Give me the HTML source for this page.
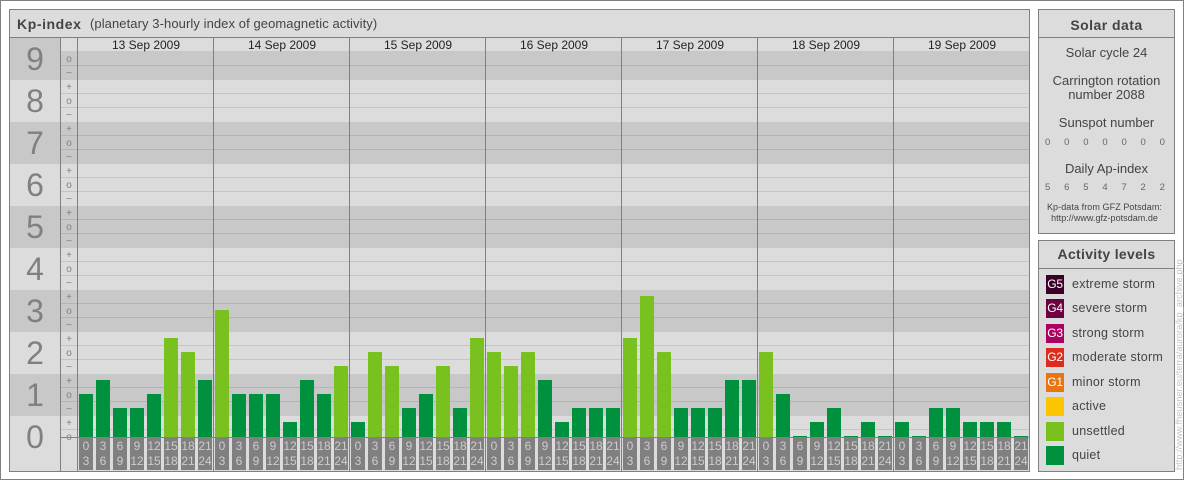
<!DOCTYPE html>
<html><head><meta charset="utf-8"><style>
html,body{margin:0;padding:0;background:#fff}
#p{position:relative;width:1184px;height:480px;overflow:hidden;background:#fff;font-family:"Liberation Sans",sans-serif;color:#444}
#p div{position:absolute;box-sizing:border-box}
.v{background:#808080;width:1px}
.d{background:#c8c8c8}
.hl{left:61px;width:968px;height:1px;background:rgba(0,0,0,.1)}
.num{left:10px;width:50px;text-align:center;font-size:32px;line-height:42px;color:#808080}
.s{left:61px;width:16px;text-align:center;font-size:10px;line-height:14px;color:#808080;margin-top:1px}
.date{top:38px;width:136px;height:14px;text-align:center;font-size:12px;line-height:14px;color:#222}
.row{display:flex;gap:3px}
#p .row>span{display:block;width:14px;flex:none}
.q{background:#00913f}.u{background:#78c11e}
#p .lab>span{height:32px;background:#808080;color:#ccc;font-size:12px;line-height:15px;text-align:center;padding-top:1px;box-sizing:border-box}
.c{text-align:center;left:1039px;width:135px;white-space:nowrap}
.t{font-size:13px;line-height:14px;color:#444}
.nums{left:1039px;width:135px;display:flex;justify-content:space-between;padding:0 9px 0 6px;font-size:9.5px;line-height:12px;color:#666}
.sw{left:1046px;width:18px;height:19px;color:#fff;font-size:12px;letter-spacing:-.3px;line-height:19px;text-align:center;white-space:nowrap}
.lt{left:1072px;font-size:12.5px;line-height:14px;letter-spacing:.25px;color:#444;white-space:nowrap}
</style></head><body><div id="p">
<div style="left:0;top:0;width:1184px;height:480px;border:1px solid #808080"></div>
<div style="left:9px;top:9px;width:1021px;height:463px;border:1px solid #808080;background:#dcdcdc"></div>
<div style="left:10px;top:37px;width:1019px;height:1px;background:#808080"></div>
<div style="left:17px;top:16px;font-size:14px;font-weight:bold;line-height:16px;letter-spacing:.58px;color:#444">Kp-index</div>
<div style="left:90px;top:16px;font-size:13px;line-height:16px;letter-spacing:.08px;color:#444;white-space:nowrap">(planetary 3-hourly index of geomagnetic activity)</div>

<div class="d" style="left:10px;top:38px;width:51px;height:42px"></div>
<div class="d" style="left:61px;top:51px;width:968px;height:29px"></div>
<div class="d" style="left:10px;top:122px;width:1019px;height:42px"></div>
<div class="d" style="left:10px;top:206px;width:1019px;height:42px"></div>
<div class="d" style="left:10px;top:290px;width:1019px;height:42px"></div>
<div class="d" style="left:10px;top:374px;width:1019px;height:42px"></div>

<div class="hl" style="top:65px"></div><div class="hl" style="top:93px"></div><div class="hl" style="top:107px"></div>
<div class="hl" style="top:135px"></div><div class="hl" style="top:149px"></div><div class="hl" style="top:177px"></div>
<div class="hl" style="top:191px"></div><div class="hl" style="top:219px"></div><div class="hl" style="top:233px"></div>
<div class="hl" style="top:261px"></div><div class="hl" style="top:275px"></div><div class="hl" style="top:303px"></div>
<div class="hl" style="top:317px"></div><div class="hl" style="top:345px"></div><div class="hl" style="top:359px"></div>
<div class="hl" style="top:387px"></div><div class="hl" style="top:401px"></div><div class="hl" style="top:429px"></div>

<div class="num" style="top:38px">9</div><div class="num" style="top:80px">8</div><div class="num" style="top:122px">7</div>
<div class="num" style="top:164px">6</div><div class="num" style="top:206px">5</div><div class="num" style="top:248px">4</div>
<div class="num" style="top:290px">3</div><div class="num" style="top:332px">2</div><div class="num" style="top:374px">1</div>
<div class="num" style="top:416px">0</div>

<div class="s" style="top:52px">o</div><div class="s" style="top:66px">−</div>
<div class="s" style="top:80px">+</div><div class="s" style="top:94px">o</div><div class="s" style="top:108px">−</div>
<div class="s" style="top:122px">+</div><div class="s" style="top:136px">o</div><div class="s" style="top:150px">−</div>
<div class="s" style="top:164px">+</div><div class="s" style="top:178px">o</div><div class="s" style="top:192px">−</div>
<div class="s" style="top:206px">+</div><div class="s" style="top:220px">o</div><div class="s" style="top:234px">−</div>
<div class="s" style="top:248px">+</div><div class="s" style="top:262px">o</div><div class="s" style="top:276px">−</div>
<div class="s" style="top:290px">+</div><div class="s" style="top:304px">o</div><div class="s" style="top:318px">−</div>
<div class="s" style="top:332px">+</div><div class="s" style="top:346px">o</div><div class="s" style="top:360px">−</div>
<div class="s" style="top:374px">+</div><div class="s" style="top:388px">o</div><div class="s" style="top:402px">−</div>
<div class="s" style="top:416px">+</div><div class="s" style="top:430px">o</div>

<div class="date" style="left:78px">13 Sep 2009</div><div class="date" style="left:214px">14 Sep 2009</div>
<div class="date" style="left:350px">15 Sep 2009</div><div class="date" style="left:486px">16 Sep 2009</div>
<div class="date" style="left:622px">17 Sep 2009</div><div class="date" style="left:758px">18 Sep 2009</div>
<div class="date" style="left:894px">19 Sep 2009</div>

<div class="row" style="left:79px;top:38px;height:399px;align-items:flex-end">
<span class="q" style="height:43px"></span><span class="q" style="height:57px"></span><span class="q" style="height:29px"></span><span class="q" style="height:29px"></span><span class="q" style="height:43px"></span><span class="u" style="height:99px"></span><span class="u" style="height:85px"></span><span class="q" style="height:57px"></span>
<span class="u" style="height:127px"></span><span class="q" style="height:43px"></span><span class="q" style="height:43px"></span><span class="q" style="height:43px"></span><span class="q" style="height:15px"></span><span class="q" style="height:57px"></span><span class="q" style="height:43px"></span><span class="u" style="height:71px"></span>
<span class="q" style="height:15px"></span><span class="u" style="height:85px"></span><span class="u" style="height:71px"></span><span class="q" style="height:29px"></span><span class="q" style="height:43px"></span><span class="u" style="height:71px"></span><span class="q" style="height:29px"></span><span class="u" style="height:99px"></span>
<span class="u" style="height:85px"></span><span class="u" style="height:71px"></span><span class="u" style="height:85px"></span><span class="q" style="height:57px"></span><span class="q" style="height:15px"></span><span class="q" style="height:29px"></span><span class="q" style="height:29px"></span><span class="q" style="height:29px"></span>
<span class="u" style="height:99px"></span><span class="u" style="height:141px"></span><span class="u" style="height:85px"></span><span class="q" style="height:29px"></span><span class="q" style="height:29px"></span><span class="q" style="height:29px"></span><span class="q" style="height:57px"></span><span class="q" style="height:57px"></span>
<span class="u" style="height:85px"></span><span class="q" style="height:43px"></span><span class="q" style="height:1px"></span><span class="q" style="height:15px"></span><span class="q" style="height:29px"></span><span class="q" style="height:1px"></span><span class="q" style="height:15px"></span><span class="q" style="height:1px"></span>
<span class="q" style="height:15px"></span><span class="q" style="height:1px"></span><span class="q" style="height:29px"></span><span class="q" style="height:29px"></span><span class="q" style="height:15px"></span><span class="q" style="height:15px"></span><span class="q" style="height:15px"></span><span class="q" style="height:1px"></span>
</div>

<div style="left:61px;top:437px;width:968px;height:1px;background:#808080"></div>
<div class="row lab" style="left:79px;top:438px">
<span>0<br>3</span><span>3<br>6</span><span>6<br>9</span><span>9<br>12</span><span>12<br>15</span><span>15<br>18</span><span>18<br>21</span><span>21<br>24</span>
<span>0<br>3</span><span>3<br>6</span><span>6<br>9</span><span>9<br>12</span><span>12<br>15</span><span>15<br>18</span><span>18<br>21</span><span>21<br>24</span>
<span>0<br>3</span><span>3<br>6</span><span>6<br>9</span><span>9<br>12</span><span>12<br>15</span><span>15<br>18</span><span>18<br>21</span><span>21<br>24</span>
<span>0<br>3</span><span>3<br>6</span><span>6<br>9</span><span>9<br>12</span><span>12<br>15</span><span>15<br>18</span><span>18<br>21</span><span>21<br>24</span>
<span>0<br>3</span><span>3<br>6</span><span>6<br>9</span><span>9<br>12</span><span>12<br>15</span><span>15<br>18</span><span>18<br>21</span><span>21<br>24</span>
<span>0<br>3</span><span>3<br>6</span><span>6<br>9</span><span>9<br>12</span><span>12<br>15</span><span>15<br>18</span><span>18<br>21</span><span>21<br>24</span>
<span>0<br>3</span><span>3<br>6</span><span>6<br>9</span><span>9<br>12</span><span>12<br>15</span><span>15<br>18</span><span>18<br>21</span><span>21<br>24</span>
</div>

<div class="v" style="left:60px;top:38px;height:433px"></div>
<div class="v" style="left:77px;top:38px;height:433px"></div>
<div class="v" style="left:213px;top:38px;height:433px"></div>
<div class="v" style="left:349px;top:38px;height:433px"></div>
<div class="v" style="left:485px;top:38px;height:433px"></div>
<div class="v" style="left:621px;top:38px;height:433px"></div>
<div class="v" style="left:757px;top:38px;height:433px"></div>
<div class="v" style="left:893px;top:38px;height:433px"></div>

<div style="left:1038px;top:9px;width:137px;height:225px;border:1px solid #808080;background:#dcdcdc"></div>
<div style="left:1039px;top:37px;width:135px;height:1px;background:#808080"></div>
<div class="c" style="top:17px;font-size:14px;font-weight:bold;line-height:16px;letter-spacing:.45px;color:#444">Solar data</div>
<div class="c t" style="top:46px">Solar cycle 24</div>
<div class="c t" style="top:74px">Carrington rotation</div>
<div class="c t" style="top:88px">number 2088</div>
<div class="c t" style="top:116px">Sunspot number</div>
<div class="nums" style="top:137px"><span>0</span><span>0</span><span>0</span><span>0</span><span>0</span><span>0</span><span>0</span></div>
<div class="c t" style="top:162px">Daily Ap-index</div>
<div class="nums" style="top:182px"><span>5</span><span>6</span><span>5</span><span>4</span><span>7</span><span>2</span><span>2</span></div>
<div class="c" style="left:1037px;top:202px;font-size:9px;letter-spacing:.08px;line-height:11px;color:#444">Kp-data from GFZ Potsdam:</div>
<div class="c" style="left:1037px;top:213px;font-size:9px;letter-spacing:.03px;line-height:11px;color:#444">http://www.gfz-potsdam.de</div>

<div style="left:1038px;top:240px;width:137px;height:232px;border:1px solid #808080;background:#dcdcdc"></div>
<div style="left:1039px;top:268px;width:135px;height:1px;background:#808080"></div>
<div class="c" style="top:246px;font-size:14px;font-weight:bold;line-height:16px;letter-spacing:.3px;color:#444">Activity levels</div>

<div class="sw" style="top:275px;background:#3d0028">G5</div><div class="lt" style="top:277px">extreme storm</div>
<div class="sw" style="top:299px;background:#6c0040">G4</div><div class="lt" style="top:301px">severe storm</div>
<div class="sw" style="top:324px;background:#ae0060">G3</div><div class="lt" style="top:326px">strong storm</div>
<div class="sw" style="top:348px;background:#dd2c1d">G2</div><div class="lt" style="top:350px">moderate storm</div>
<div class="sw" style="top:373px;background:#e87510">G1</div><div class="lt" style="top:375px">minor storm</div>
<div class="sw" style="top:397px;background:#fdc500"></div><div class="lt" style="top:399px">active</div>
<div class="sw" style="top:422px;background:#78c11e"></div><div class="lt" style="top:424px">unsettled</div>
<div class="sw" style="top:446px;background:#00913f"></div><div class="lt" style="top:448px">quiet</div>

<div style="left:1173px;top:470px;width:210px;height:12px;font-size:9.3px;line-height:12px;color:#c4c4c4;white-space:nowrap;transform-origin:0 0;transform:rotate(-90deg)">http://www.fheusner.eu/terra/aurora/kp_archive.php</div>
</div></body></html>
